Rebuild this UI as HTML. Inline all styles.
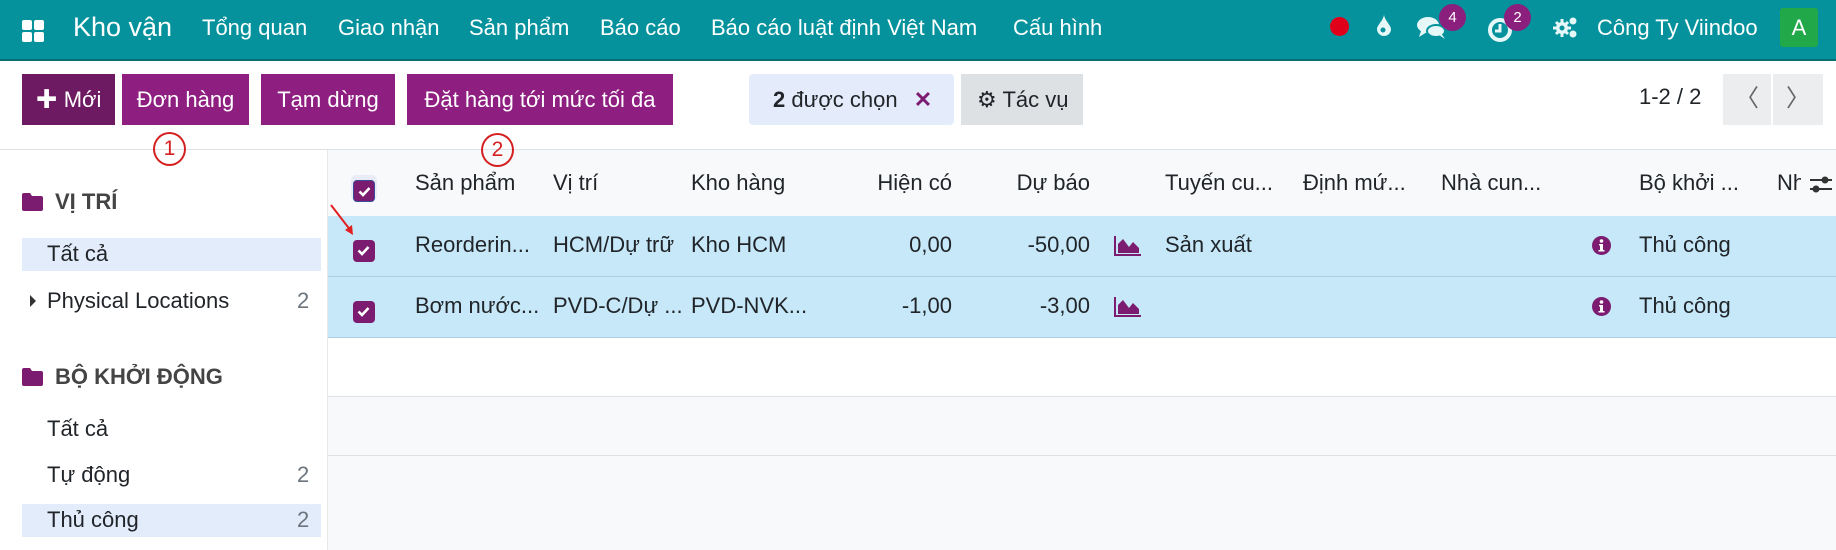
<!DOCTYPE html>
<html><head><meta charset="utf-8"><style>
*{box-sizing:border-box;margin:0;padding:0}
body{width:1836px;height:550px;overflow:hidden;background:#fff;font-family:"Liberation Sans","Noto Sans CJK SC",sans-serif;color:#212529;position:relative;font-size:22px}
.abs{position:absolute;white-space:nowrap}
.nav{position:absolute;left:0;top:0;width:1836px;height:61px;background:#05929c;border-bottom:2px solid #0a6d74}
.nav .t{position:absolute;top:15px;color:#fff;font-size:22px}
.btn{position:absolute;top:74px;height:51px;background:#8e1e80;color:#fff;font-size:22px;line-height:51px;text-align:center}
.row{position:absolute;left:328px;width:1508px;height:61px;background:#c6e8f8;border-bottom:1px solid #a9cfe0}
.cb{position:absolute;width:22px;height:22px;background:#7c1c70;border-radius:4px}
.cb svg{position:absolute;left:4px;top:5px}
.c{position:absolute;font-size:22px;white-space:nowrap}
.side{position:absolute;font-size:22px;white-space:nowrap}
.cnt{position:absolute;left:297px;color:#6c757d;font-size:22px}
.hl{position:absolute;left:22px;width:299px;height:33px;background:#e3ecfb}
</style></head><body>
<div class="nav">
 <svg class="abs" style="left:22px;top:20px" width="22" height="22"><rect x="0" y="0" width="10" height="10" rx="2" fill="#fff"/><rect x="12" y="0" width="10" height="10" rx="2" fill="#fff"/><rect x="0" y="12" width="10" height="10" rx="2" fill="#fff"/><rect x="12" y="12" width="10" height="10" rx="2" fill="#fff"/></svg>
 <div class="t" style="left:73px;top:12px;font-size:27px">Kho vận</div>
 <div class="t" style="left:202px">Tổng quan</div>
 <div class="t" style="left:338px">Giao nhận</div>
 <div class="t" style="left:469px">Sản phẩm</div>
 <div class="t" style="left:600px">Báo cáo</div>
 <div class="t" style="left:711px">Báo cáo luật định Việt Nam</div>
 <div class="t" style="left:1013px">Cấu hình</div>
 <div class="abs" style="left:1330px;top:17px;width:19px;height:19px;border-radius:50%;background:#e0001a"></div>
 <svg class="abs" style="left:1376px;top:14px" width="16" height="22"><path d="M8 0 C8 6 1 11 1 15 A7 7 0 0 0 15 15 C15 11 8 6 8 0Z" fill="#e6f7f8"/><circle cx="7" cy="16" r="2.5" fill="#05929c"/></svg>
 <svg class="abs" style="left:1417px;top:16px" width="30" height="24"><ellipse cx="11" cy="9" rx="11" ry="8" fill="#e6f7f8"/><path d="M4 15 L2 21 L10 16Z" fill="#e6f7f8"/><ellipse cx="19" cy="15" rx="9" ry="6" fill="#e6f7f8" stroke="#05929c" stroke-width="2"/><path d="M22 19 L28 23 L24 17Z" fill="#e6f7f8"/></svg>
 <div class="abs" style="left:1439px;top:4px;width:27px;height:27px;border-radius:50%;background:#8a1f7d;color:#fff;font-size:15px;text-align:center;line-height:27px">4</div>
 <svg class="abs" style="left:1487px;top:17px" width="26" height="26"><circle cx="13" cy="13" r="10" fill="none" stroke="#e6f7f8" stroke-width="4"/><path d="M13 7 V14 H8" stroke="#e6f7f8" stroke-width="3" fill="none"/></svg>
 <div class="abs" style="left:1504px;top:4px;width:27px;height:27px;border-radius:50%;background:#8a1f7d;color:#fff;font-size:15px;text-align:center;line-height:27px">2</div>
 <svg class="abs" style="left:1553px;top:15px" width="26" height="24" fill="#e6f7f8"><circle cx="9" cy="13" r="6"/><circle cx="20" cy="6" r="3.5"/><circle cx="20" cy="19" r="3.5"/><g stroke="#e6f7f8" stroke-width="3"><path d="M9 4V22M0 13H18M3 7L15 19M15 7L3 19"/></g><circle cx="9" cy="13" r="2.5" fill="#05929c"/></svg>
 <div class="t" style="left:1597px">Công Ty Viindoo</div>
 <div class="abs" style="left:1780px;top:8px;width:38px;height:39px;background:#21a949;border-radius:3px;color:#fff;font-size:22px;text-align:center;line-height:39px">A</div>
</div>

<div class="btn" style="left:22px;width:93px;background:#6d1a62">✚ Mới</div>
<div class="btn" style="left:122px;width:127px">Đơn hàng</div>
<div class="btn" style="left:261px;width:134px">Tạm dừng</div>
<div class="btn" style="left:407px;width:266px">Đặt hàng tới mức tối đa</div>
<div class="abs" style="left:749px;top:74px;width:205px;height:51px;background:#e4ecfb;border-radius:4px;font-size:22px;line-height:51px;padding-left:24px"><b>2</b> được chọn <span style="color:#7c1c70;margin-left:10px;font-weight:bold">✕</span></div>
<div class="abs" style="left:961px;top:74px;width:122px;height:51px;background:#dee1e4;font-size:22px;line-height:51px;padding-left:16px">⚙ Tác vụ</div>
<div class="abs" style="left:1639px;top:84px;font-size:22px">1-2 / 2</div>
<div class="abs" style="left:1723px;top:74px;width:48px;height:51px;background:#ebedef;color:#666;font-size:24px;line-height:49px;text-align:center">〈</div>
<div class="abs" style="left:1773px;top:74px;width:50px;height:51px;background:#ebedef;color:#666;font-size:24px;line-height:49px;text-align:center">〉</div>

<div class="abs" style="left:0;top:149px;width:1836px;height:1px;background:#dee2e6"></div>
<div class="abs" style="left:327px;top:150px;width:1px;height:400px;background:#e8e8e8"></div>
<div class="abs" style="left:328px;top:150px;width:1508px;height:400px;background:#f8f9fa"></div>
<div class="abs" style="left:328px;top:338px;width:1508px;height:59px;background:#fff;border-bottom:1px solid #dee2e6"></div>
<div class="abs" style="left:328px;top:455px;width:1508px;height:1px;background:#dee2e6"></div>

<!-- header -->
<div class="abs" style="left:351px;top:175px;width:26px;height:26px;background:#e9ecf5;border-radius:5px"></div>
<div class="cb" style="left:353px;top:180px;border:1.5px solid #3b4a9a"><svg width="13" height="11"><path d="M1.5 5.5 L5 9 L11.5 2" stroke="#fff" stroke-width="2.6" fill="none"/></svg></div>
<div class="c" style="left:415px;top:170px">Sản phẩm</div>
<div class="c" style="left:553px;top:170px">Vị trí</div>
<div class="c" style="left:691px;top:170px">Kho hàng</div>
<div class="c" style="right:884px;top:170px">Hiện có</div>
<div class="c" style="right:746px;top:170px">Dự báo</div>
<div class="c" style="left:1165px;top:170px">Tuyến cu...</div>
<div class="c" style="left:1303px;top:170px">Định mứ...</div>
<div class="c" style="left:1441px;top:170px">Nhà cun...</div>
<div class="c" style="left:1639px;top:170px">Bộ khởi ...</div>
<div class="c" style="left:1777px;top:170px;width:24px;overflow:hidden">Nh</div>
<svg class="abs" style="left:1809px;top:172px" width="24" height="24"><path d="M1 8H23M1 17H23" stroke="#333" stroke-width="2"/><circle cx="16" cy="8" r="3.5" fill="#333"/><circle cx="7" cy="17" r="3.5" fill="#333"/></svg>

<!-- rows -->
<div class="row" style="top:216px"></div>
<div class="row" style="top:277px"></div>
<div class="cb" style="left:353px;top:240px"><svg width="13" height="11"><path d="M1.5 5.5 L5 9 L11.5 2" stroke="#fff" stroke-width="2.6" fill="none"/></svg></div>
<div class="cb" style="left:353px;top:301px"><svg width="13" height="11"><path d="M1.5 5.5 L5 9 L11.5 2" stroke="#fff" stroke-width="2.6" fill="none"/></svg></div>
<div class="c" style="left:415px;top:232px">Reorderin...</div>
<div class="c" style="left:553px;top:232px;width:134px;overflow:hidden">HCM/Dự trữ</div>
<div class="c" style="left:691px;top:232px">Kho HCM</div>
<div class="c" style="right:884px;top:232px">0,00</div>
<div class="c" style="right:746px;top:232px">-50,00</div>
<div class="c" style="left:1165px;top:232px">Sản xuất</div>
<div class="c" style="left:1639px;top:232px">Thủ công</div>
<div class="c" style="left:415px;top:293px;width:134px;overflow:hidden">Bơm nước...</div>
<div class="c" style="left:553px;top:293px;width:134px;overflow:hidden">PVD-C/Dự ...</div>
<div class="c" style="left:691px;top:293px;width:120px;overflow:hidden">PVD-NVK...</div>
<div class="c" style="right:884px;top:293px">-1,00</div>
<div class="c" style="right:746px;top:293px">-3,00</div>
<div class="c" style="left:1639px;top:293px">Thủ công</div>
<svg class="abs" style="left:1114px;top:236px" width="27" height="20"><path d="M1 0V19H27" stroke="#7c1c70" stroke-width="2" fill="none"/><path d="M4 17V8L9 3L15 11L19 6L25 12V17Z" fill="#7c1c70"/></svg>
<svg class="abs" style="left:1114px;top:297px" width="27" height="20"><path d="M1 0V19H27" stroke="#7c1c70" stroke-width="2" fill="none"/><path d="M4 17V8L9 3L15 11L19 6L25 12V17Z" fill="#7c1c70"/></svg>
<svg class="abs" style="left:1592px;top:236px" width="19" height="19"><circle cx="9.5" cy="9.5" r="9.5" fill="#7c1c70"/><circle cx="9.5" cy="5" r="1.8" fill="#fff"/><path d="M7 8H11V14H12.5V15.5H6.5V14H8V9.5H7Z" fill="#fff"/></svg>
<svg class="abs" style="left:1592px;top:297px" width="19" height="19"><circle cx="9.5" cy="9.5" r="9.5" fill="#7c1c70"/><circle cx="9.5" cy="5" r="1.8" fill="#fff"/><path d="M7 8H11V14H12.5V15.5H6.5V14H8V9.5H7Z" fill="#fff"/></svg>

<!-- sidebar -->
<svg class="abs" style="left:22px;top:193px" width="21" height="18"><path d="M0 2Q0 0 2 0H8L10 3H19Q21 3 21 5V16Q21 18 19 18H2Q0 18 0 16Z" fill="#7c1c70"/></svg>
<div class="side" style="left:55px;top:189px;font-weight:bold;color:#444">VỊ TRÍ</div>
<div class="hl" style="top:238px"></div>
<div class="side" style="left:47px;top:241px">Tất cả</div>
<div class="abs" style="left:30px;top:295px;width:0;height:0;border-left:6px solid #333;border-top:6px solid transparent;border-bottom:6px solid transparent"></div>
<div class="side" style="left:47px;top:288px">Physical Locations</div>
<div class="cnt" style="top:288px">2</div>
<svg class="abs" style="left:22px;top:368px" width="21" height="18"><path d="M0 2Q0 0 2 0H8L10 3H19Q21 3 21 5V16Q21 18 19 18H2Q0 18 0 16Z" fill="#7c1c70"/></svg>
<div class="side" style="left:55px;top:364px;font-weight:bold;color:#444">BỘ KHỞI ĐỘNG</div>
<div class="side" style="left:47px;top:416px">Tất cả</div>
<div class="side" style="left:47px;top:462px">Tự động</div>
<div class="cnt" style="top:462px">2</div>
<div class="hl" style="top:504px"></div>
<div class="side" style="left:47px;top:507px">Thủ công</div>
<div class="cnt" style="top:507px">2</div>

<!-- annotations -->
<div class="abs" style="left:153px;top:132px;width:33px;height:34px;border:2px solid #d42020;border-radius:50%;color:#d42020;font-size:21px;text-align:center;line-height:30px">1</div>
<div class="abs" style="left:481px;top:133px;width:33px;height:34px;border:2px solid #d42020;border-radius:50%;color:#d42020;font-size:21px;text-align:center;line-height:30px">2</div>
<svg class="abs" style="left:325px;top:200px" width="35" height="40"><path d="M6 5L26 31" stroke="#e02020" stroke-width="2"/><path d="M28 35L20 30L27 25Z" fill="#e02020"/></svg>
</body></html>
